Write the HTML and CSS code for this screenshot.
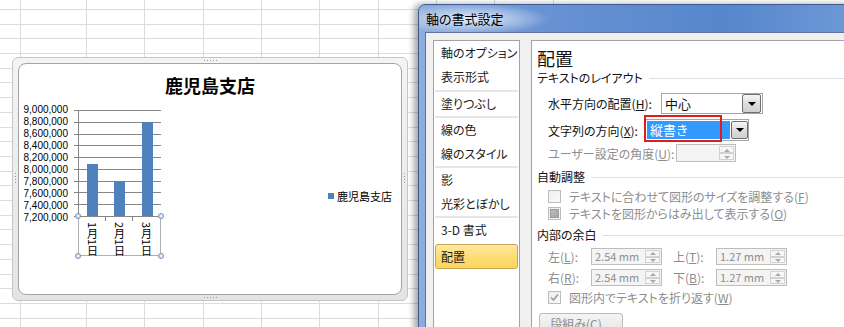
FILE: index.html
```html
<!DOCTYPE html>
<html lang="ja">
<head>
    <meta charset="UTF-8">
    <meta name="viewport" content="width=device-width, initial-scale=1.0">
    <title>軸の書式設定</title>
    <link rel="stylesheet" href="styles.css">
</head>
<body>
    <div class="sheet">
        <div class="col col-head"></div>
        <div class="col col-a"></div>
        <div class="col"></div>
        <div class="col"></div>
        <div class="col"></div>
        <div class="col"></div>
        <div class="col"></div>
        <div class="col"></div>
        <div class="col"></div>
        <div class="col"></div>

        <!-- chart object -->
        <div class="chart">
            <span class="grip grip-h grip-top"></span>
            <span class="grip grip-h grip-bottom"></span>
            <span class="grip grip-v grip-left"></span>
            <span class="grip grip-v grip-right"></span>
            <div class="chart-body">
                <div class="chart-title">鹿児島支店</div>
                <div class="plot-row">
                    <div class="y-labels">
                        <span>9,000,000</span>
                        <span>8,800,000</span>
                        <span>8,600,000</span>
                        <span>8,400,000</span>
                        <span>8,200,000</span>
                        <span>8,000,000</span>
                        <span>7,800,000</span>
                        <span>7,600,000</span>
                        <span>7,400,000</span>
                        <span>7,200,000</span>
                    </div>
                    <div class="plot">
                        <div class="grid-area">
                            <div class="gridlines">
                                <i></i><i></i><i></i><i></i><i></i><i></i><i></i><i></i><i></i><i></i>
                            </div>
                            <div class="bars">
                                <div class="bar-cat"><div class="bar" style="height: 52px"></div></div>
                                <div class="bar-cat"><div class="bar" style="height: 35px"></div></div>
                                <div class="bar-cat"><div class="bar" style="height: 94px"></div></div>
                            </div>
                        </div>
                        <div class="x-axis">
                            <span class="tick tick-1"></span>
                            <span class="tick tick-2"></span>
                            <div class="x-cat"><span class="x-label">1月1日</span></div>
                            <div class="x-cat"><span class="x-label">2月1日</span></div>
                            <div class="x-cat"><span class="x-label">3月1日</span></div>
                            <span class="handle h-tl"></span>
                            <span class="handle h-tr"></span>
                            <span class="handle h-bl"></span>
                            <span class="handle h-br"></span>
                        </div>
                    </div>
                    <div class="legend"><span class="swatch"></span>鹿児島支店</div>
                </div>
            </div>
        </div>

        <!-- format axis dialog -->
        <div class="dialog">
            <div class="titlebar"><span>軸の書式設定</span></div>
            <div class="client">
                <div class="cat-list">
                    <div class="cat-item">軸のオプション</div>
                    <div class="cat-item">表示形式</div>
                    <div class="cat-sep first"></div>
                    <div class="cat-item">塗りつぶし</div>
                    <div class="cat-sep"></div>
                    <div class="cat-item">線の色</div>
                    <div class="cat-item">線のスタイル</div>
                    <div class="cat-sep"></div>
                    <div class="cat-item">影</div>
                    <div class="cat-item">光彩とぼかし</div>
                    <div class="cat-sep"></div>
                    <div class="cat-item">3-D 書式</div>
                    <div class="cat-item selected">配置</div>
                </div>

                <div class="pane">
                    <div class="pane-title">配置</div>

                    <div class="group-head gh-layout">テキストのレイアウト</div>
                    <div class="field-row row-h">
                        <span class="lbl lbl-h">水平方向の配置(<u>H</u>):</span>
                        <div class="select select-h">
                            <span class="select-value">中心</span>
                            <span class="drop"></span>
                        </div>
                    </div>
                    <div class="field-row row-x">
                        <span class="lbl lbl-x">文字列の方向(<u>X</u>):</span>
                        <div class="select select-x">
                            <span class="select-value">縦書き</span>
                            <span class="drop"></span>
                            <span class="mark"></span>
                        </div>
                    </div>
                    <div class="field-row row-u disabled">
                        <span class="lbl lbl-u">ユーザー設定の角度(<u>U</u>):</span>
                        <div class="spin spin-angle">
                            <span class="spin-value"></span>
                            <span class="spin-btns"><span class="up"></span><span class="down"></span></span>
                        </div>
                    </div>

                    <div class="group-head gh-auto">自動調整</div>
                    <div class="check-row first disabled">
                        <span class="box"></span>
                        <span>テキストに合わせて図形のサイズを調整する(<u>F</u>)</span>
                    </div>
                    <div class="check-row disabled">
                        <span class="box mixed"></span>
                        <span>テキストを図形からはみ出して表示する(<u>O</u>)</span>
                    </div>

                    <div class="group-head gh-margin">内部の余白</div>
                    <div class="margin-row first disabled">
                        <span class="lbl lbl-m">左(<u>L</u>):</span>
                        <div class="spin spin-m">
                            <span class="spin-value">2.54 mm</span>
                            <span class="spin-btns"><span class="up"></span><span class="down"></span></span>
                        </div>
                        <span class="lbl lbl-m second">上(<u>T</u>):</span>
                        <div class="spin spin-m">
                            <span class="spin-value">1.27 mm</span>
                            <span class="spin-btns"><span class="up"></span><span class="down"></span></span>
                        </div>
                    </div>
                    <div class="margin-row disabled">
                        <span class="lbl lbl-m">右(<u>R</u>):</span>
                        <div class="spin spin-m">
                            <span class="spin-value">2.54 mm</span>
                            <span class="spin-btns"><span class="up"></span><span class="down"></span></span>
                        </div>
                        <span class="lbl lbl-m second">下(<u>B</u>):</span>
                        <div class="spin spin-m">
                            <span class="spin-value">1.27 mm</span>
                            <span class="spin-btns"><span class="up"></span><span class="down"></span></span>
                        </div>
                    </div>
                    <div class="check-row wrap disabled">
                        <span class="box checked">
                            <svg width="9" height="9" viewBox="0 0 9 9"><path d="M1 4.5 L3.5 7 L8 1.5" fill="none" stroke="#9a9a9a" stroke-width="1.6"/></svg>
                        </span>
                        <span>図形内でテキストを折り返す(<u>W</u>)</span>
                    </div>

                    <div class="btn">段組み(<u>C</u>)...</div>
                </div>
            </div>
        </div>
    </div>
</body>
</html>
```

FILE: styles.css
```css
* {
    box-sizing: border-box;
}

body {
    margin: 0;
    font-family: "Noto Sans CJK JP", "Noto Sans", sans-serif;
    font-feature-settings: "palt";
    color: #111;
    overflow: hidden;
}

u {
    text-decoration: underline;
    text-underline-offset: 1px;
}

/* spreadsheet behind everything */
.sheet {
    position: relative;
    display: flex;
    width: 844px;
    height: 327px;
    overflow: hidden;
    background-color: #fff;
    background-image: repeating-linear-gradient(to bottom, transparent -4.7px, transparent 9px, #dadcdd 9px, #dadcdd 10px);
}

.col {
    flex: 0 0 58.33px;
    border-right: 1px solid #dadcdd;
}

.col-head {
    flex-basis: 21px;
}

.col-a {
    flex-basis: 66px;
}

/* chart */
.chart {
    position: absolute;
    left: 12px;
    top: 57px;
    width: 396px;
    height: 244px;
    padding: 5px;
    border: 1px solid #c6c6c6;
    border-radius: 6px;
    background: linear-gradient(#f4f4f4, #e4e4e4);
}

.grip {
    position: absolute;
    background-image: radial-gradient(circle, #9a9a9a 0.7px, transparent 1px);
    background-size: 3px 3px;
}

.grip-h {
    left: 190px;
    width: 15px;
    height: 3px;
}

.grip-top {
    top: 1px;
}

.grip-bottom {
    bottom: 1px;
}

.grip-v {
    top: 114px;
    width: 3px;
    height: 12px;
}

.grip-left {
    left: 1px;
}

.grip-right {
    right: 1px;
}

.chart-body {
    height: 100%;
    padding-top: 10px;
    border: 1px solid #a4a4a4;
    border-radius: 8px;
    background: #fff;
}

.chart-title {
    font-size: 18px;
    font-weight: bold;
    line-height: 22px;
    text-align: center;
    color: #000;
}

.plot-row {
    display: flex;
    align-items: flex-start;
    margin-top: 8px;
    padding-right: 9px;
}

.y-labels {
    display: flex;
    flex-direction: column;
    justify-content: space-between;
    width: 49px;
    height: 118px;
    font-family: "Liberation Sans", Arial, sans-serif;
    font-size: 10px;
    line-height: 12px;
    text-align: right;
    color: #000;
}

.plot {
    width: 87px;
    margin-left: 6px;
    padding-top: 6px;
}

.grid-area {
    position: relative;
    height: 107px;
}

.gridlines {
    display: flex;
    flex-direction: column;
    justify-content: space-between;
    height: 100%;
}

.gridlines i {
    display: block;
    height: 1px;
    background: #868686;
}

.bars {
    position: absolute;
    left: 4px;
    top: 0;
    right: 0;
    bottom: 1px;
    display: flex;
    border-left: 1px solid #868686;
}

.bar-cat {
    flex: 1;
    display: flex;
    justify-content: center;
    align-items: flex-end;
}

.bar {
    width: 11px;
    background: #4f81bd;
}

.x-axis {
    position: relative;
    display: flex;
    width: 83px;
    height: 39px;
    margin-left: 4px;
    padding-top: 5px;
    border: 1px solid #b0b0b0;
    border-top: 0;
}

.tick {
    position: absolute;
    top: 0;
    width: 1px;
    height: 4px;
    background: #868686;
}

.tick-1 {
    left: 26px;
}

.tick-2 {
    left: 53px;
}

.x-cat {
    flex: 1;
    display: flex;
    justify-content: center;
    align-items: flex-start;
}

.x-label {
    writing-mode: vertical-rl;
    text-orientation: mixed;
    white-space: nowrap;
    font-feature-settings: normal;
    font-size: 11px;
    line-height: 12px;
    color: #000;
}

.handle {
    position: absolute;
    width: 6px;
    height: 6px;
    border: 1px solid #7390b8;
    border-radius: 50%;
    background: #dfe8f4;
}

.h-tl { left: -4px; top: -4px; }
.h-tr { right: -4px; top: -4px; }
.h-bl { left: -4px; bottom: -4px; }
.h-br { right: -4px; bottom: -4px; }

.legend {
    display: flex;
    align-items: center;
    gap: 3px;
    margin-left: auto;
    margin-top: 85px;
    font-size: 11px;
    line-height: 14px;
    color: #000;
}

.swatch {
    width: 6px;
    height: 6px;
    background: #4f81bd;
}

/* dialog window */
.dialog {
    position: absolute;
    left: 418px;
    top: 4px;
    width: 440px;
    height: 340px;
    border: 1px solid #3d5b8b;
    border-radius: 7px 7px 0 0;
    background: linear-gradient(to right, #8eadde 0, #6892d3 28%, #5786cd 70%, #6f99d7 100%);
    box-shadow: -4px 0 6px rgba(0, 0, 0, 0.35);
}

.titlebar {
    height: 27px;
    padding-left: 7px;
    font-size: 13px;
    line-height: 27px;
    color: #000;
    background: radial-gradient(ellipse 80px 15px at 52px 14px, rgba(235, 241, 250, 0.95), rgba(235, 241, 250, 0) 100%);
    border-radius: 6px 6px 0 0;
}

.client {
    display: flex;
    gap: 11px;
    height: calc(100% - 27px);
    margin-left: 6px;
    padding: 7px 0 0 7px;
    border-top: 1px solid #5d759d;
    border-left: 1px solid #5d759d;
    background: #f0f0f0;
}

.cat-list {
    flex: 0 0 87px;
    border: 1px solid #a3a3a3;
    background: #fff;
}

.cat-item {
    height: 24px;
    padding-left: 7px;
    font-size: 12px;
    line-height: 24px;
    color: #1a1a1a;
}

.cat-sep {
    height: 2px;
    margin: 0 1px;
    background: #e6e6e6;
}

.cat-sep.first {
    margin-top: 1px;
}

.cat-item.selected {
    height: 25px;
    margin: 2px 1px 0;
    padding-left: 5px;
    line-height: 23px;
    border: 1px solid #c8a54b;
    border-radius: 3px;
    background: linear-gradient(#fee9a3, #fdda6b 60%, #fcd662);
}

.pane {
    flex: 1;
    padding: 6px 0 0 5px;
    border: 1px solid #a3a3a3;
    background: #fff;
    font-size: 12px;
}

.pane-title {
    font-size: 18px;
    line-height: 22px;
    color: #111;
}

.group-head {
    display: flex;
    align-items: center;
    line-height: 16px;
}

.group-head::after {
    content: "";
    flex: 1;
    height: 1px;
    margin-left: 6px;
    background: #d5dfe5;
}

.gh-layout { margin-top: 1px; }
.gh-auto { margin-top: 7px; }
.gh-margin { margin-top: 5px; }

.field-row {
    display: flex;
    align-items: center;
    padding-left: 11px;
}

.row-h { height: 21px; margin-top: 7px; }
.row-x { height: 22px; margin-top: 5px; }
.row-u { height: 18px; margin-top: 3px; }

.lbl {
    flex: none;
}

.lbl-h { width: 113px; }
.lbl-x { width: 97px; }
.lbl-u { width: 128px; }

.disabled {
    color: #8d8d8d;
}

.select {
    position: relative;
    display: flex;
    height: 100%;
    border: 1px solid #a5a5a5;
    background: #fff;
}

.select-h {
    width: 102px;
}

.select-x {
    width: 104px;
    padding: 1px 0 1px 1px;
}

.select-value {
    flex: 1;
    padding-left: 3px;
    line-height: 19px;
    font-size: 13px;
}

.select-x .select-value {
    margin-right: 1px;
    background: #3399ff;
    color: #fff;
    line-height: 18px;
}

.drop {
    position: relative;
    width: 19px;
    border: 1px solid #6f6f6f;
    border-radius: 2px;
    background: linear-gradient(#f6f6f6, #dedede 50%, #d0d0d0);
}

.select-h .drop {
    margin: 0 1px 0 0;
}

.select-x .drop {
    width: 17px;
}

.drop::after {
    content: "";
    position: absolute;
    left: 50%;
    top: 50%;
    margin: -2px 0 0 -4px;
    border-left: 4px solid transparent;
    border-right: 4px solid transparent;
    border-top: 4px solid #000;
}

.mark {
    position: absolute;
    left: -2px;
    top: -5px;
    width: 78px;
    height: 27px;
    border: 2px solid #e21b1b;
}

.spin {
    display: flex;
    height: 100%;
    border: 1px solid #bdbdbd;
    background: #f4f4f4;
}

.spin-angle {
    width: 60px;
}

.spin-m {
    width: 71px;
    height: 17px;
}

.spin-value {
    flex: 1;
    padding-left: 3px;
    font-size: 11px;
    line-height: 15px;
    color: #8d8d8d;
}

.spin-btns {
    display: flex;
    flex-direction: column;
    width: 15px;
    margin: 1px 1px 1px 0;
}

.spin-btns span {
    position: relative;
    flex: 1;
    border: 1px solid #d2d2d2;
    background: #f6f6f6;
}

.spin-btns span::after {
    content: "";
    position: absolute;
    left: 50%;
    top: 50%;
    margin: -1px 0 0 -3px;
    border-left: 3px solid transparent;
    border-right: 3px solid transparent;
}

.spin-btns .up::after {
    border-bottom: 3px solid #a8a8a8;
}

.spin-btns .down::after {
    border-top: 3px solid #a8a8a8;
}

.check-row {
    display: flex;
    align-items: center;
    gap: 8px;
    height: 17px;
    padding-left: 11px;
}

.check-row.first { margin-top: 3px; }
.check-row.wrap { margin-top: 3px; }

.box {
    display: flex;
    align-items: center;
    justify-content: center;
    width: 13px;
    height: 13px;
    border: 1px solid #bcbcbc;
    background: linear-gradient(135deg, #eeeeee, #fbfbfb);
}

.box.mixed::after {
    content: "";
    width: 7px;
    height: 7px;
    border: 1px solid #9a9a9a;
    background: linear-gradient(135deg, #bcbcbc, #a4a4a4);
}

.margin-row {
    display: flex;
    align-items: center;
    height: 17px;
    padding-left: 11px;
}

.margin-row.first { margin-top: 5px; }
.margin-row + .margin-row { margin-top: 4px; }

.lbl-m {
    width: 43px;
}

.lbl-m.second {
    margin-left: 11px;
}

.btn {
    width: 84px;
    height: 22px;
    margin: 7px 0 0 2px;
    border: 1px solid #bcbcbc;
    border-radius: 3px;
    background: linear-gradient(#f4f4f4, #e6e6e6);
    color: #8d8d8d;
    line-height: 20px;
    text-align: center;
}
```
